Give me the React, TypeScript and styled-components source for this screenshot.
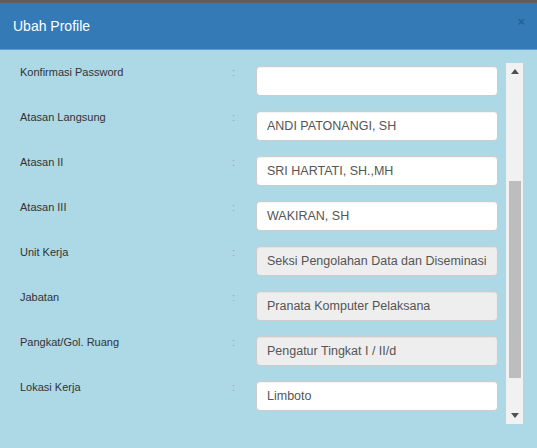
import React from "react";
import styled, { createGlobalStyle } from "styled-components";

const Global = createGlobalStyle`
  html, body { margin: 0; padding: 0; background: #add8e6; }
  body { font-family: "Liberation Sans", Arial, sans-serif; }
  #root { width: 537px; height: 448px; overflow: hidden; }
  * { box-sizing: border-box; }
`;

const Modal = styled.div`
  width: 537px;
  height: 448px;
  display: flex;
  flex-direction: column;
  background: #add8e6;
`;

const TopEdge = styled.div`
  height: 3px;
  background: #5b5f63;
  flex: none;
`;

const Header = styled.div`
  height: 47px;
  flex: none;
  background: #337ab7;
  border-bottom: 1px solid #5f9bcc;
  display: flex;
  align-items: flex-start;
  justify-content: space-between;
  padding: 0 12px 0 13px;
`;

const Title = styled.h4`
  margin: 0;
  padding-top: 15px;
  font-size: 14px;
  line-height: 16px;
  font-weight: normal;
  color: #ffffff;
  font-family: "Liberation Sans", Arial, sans-serif;
`;

const Close = styled.span`
  margin-top: 12px;
  font-size: 13px;
  line-height: 13px;
  font-weight: bold;
  color: rgba(0, 0, 0, 0.22);
  font-family: "Liberation Sans", Arial, sans-serif;
`;

const Body = styled.div`
  flex: 1;
  display: flex;
  align-items: flex-start;
  padding: 13px 14px 0 20px;
`;

const Form = styled.div`
  width: 478px;
  display: flex;
  flex-direction: column;
  gap: 13px;
  padding-top: 1px;
`;

const Row = styled.div`
  display: grid;
  grid-template-columns: 212px 24px 242px;
  align-items: start;
`;

const Label = styled.label`
  font-size: 11px;
  line-height: 16px;
  color: #333333;
`;

const Colon = styled.span`
  font-size: 11px;
  line-height: 16px;
  color: #9aa3a8;
`;

const Input = styled.input<{ $locked?: boolean }>`
  margin-top: 2px;
  height: 30px;
  width: 242px;
  border: 1px solid #cccccc;
  border-radius: 4px;
  padding: 0 10px;
  font-size: 12.5px;
  font-family: "Liberation Sans", Arial, sans-serif;
  color: #555555;
  background: ${(p) => (p.$locked ? "#eeeeee" : "#ffffff")};
  outline: none;
  box-shadow: inset 0 1px 1px rgba(0, 0, 0, 0.05);
`;

const Scrollbar = styled.div`
  width: 17px;
  height: 361px;
  margin-left: 8px;
  background: #f1f1f1;
  display: flex;
  flex-direction: column;
  align-items: center;
  flex: none;
`;

const Arrow = styled.div`
  height: 17px;
  width: 17px;
  flex: none;
  display: flex;
  align-items: center;
  justify-content: center;
`;

const Track = styled.div`
  flex: 1;
  width: 100%;
  display: flex;
  flex-direction: column;
  align-items: center;
  padding-top: 101px;
  padding-bottom: 29px;
`;

const Thumb = styled.div`
  width: 12px;
  flex: 1;
  background: #bdbdbd;
`;

const fields: { label: string; value: string; locked?: boolean }[] = [
  { label: "Konfirmasi Password", value: "" },
  { label: "Atasan Langsung", value: "ANDI PATONANGI, SH" },
  { label: "Atasan II", value: "SRI HARTATI, SH.,MH" },
  { label: "Atasan III", value: "WAKIRAN, SH" },
  { label: "Unit Kerja", value: "Seksi Pengolahan Data dan Diseminasi", locked: true },
  { label: "Jabatan", value: "Pranata Komputer Pelaksana", locked: true },
  { label: "Pangkat/Gol. Ruang", value: "Pengatur Tingkat I / II/d", locked: true },
  { label: "Lokasi Kerja", value: "Limboto" },
];

export default function App() {
  return (
    <>
      <Global />
      <Modal>
        <TopEdge />
        <Header>
          <Title>Ubah Profile</Title>
          <Close>×</Close>
        </Header>
        <Body>
          <Form>
            {fields.map((f) => (
              <Row key={f.label}>
                <Label>{f.label}</Label>
                <Colon>:</Colon>
                <Input
                  type={f.label.includes("Password") ? "password" : "text"}
                  defaultValue={f.value}
                  readOnly
                  $locked={f.locked}
                />
              </Row>
            ))}
          </Form>
          <Scrollbar>
            <Arrow>
              <svg width="8" height="5" viewBox="0 0 8 5">
                <path d="M0 5 L4 0 L8 5 Z" fill="#505050" />
              </svg>
            </Arrow>
            <Track>
              <Thumb />
            </Track>
            <Arrow>
              <svg width="8" height="5" viewBox="0 0 8 5">
                <path d="M0 0 L8 0 L4 5 Z" fill="#505050" />
              </svg>
            </Arrow>
          </Scrollbar>
        </Body>
      </Modal>
    </>
  );
}
